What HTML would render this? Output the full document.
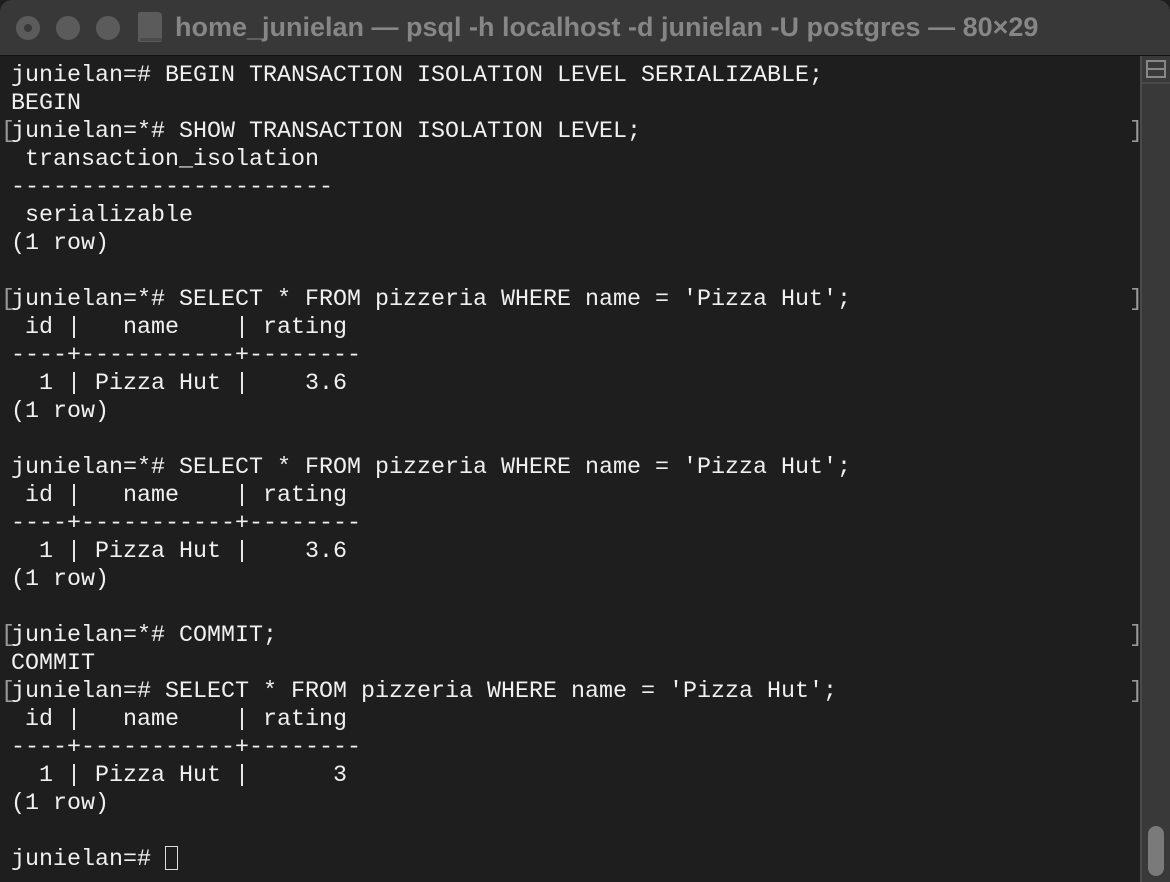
<!DOCTYPE html>
<html><head><meta charset="utf-8"><style>
html,body{margin:0;padding:0;width:1170px;height:882px;overflow:hidden;background:#1e1e1e;}
.tb{position:absolute;left:0;top:0;width:1170px;height:55px;background:#383838;border-bottom:1px solid #111;border-radius:12px 12px 0 0;}
.dot{position:absolute;top:16px;width:24px;height:24px;border-radius:50%;background:#5b5b5b;}
.title{position:absolute;left:175px;top:12px;font:bold 27px "Liberation Sans",sans-serif;color:#868686;white-space:nowrap;}
.term{position:absolute;left:0;top:62px;width:1140px;}
.ln{position:relative;height:28px;font:23.33px/28px "Liberation Mono",monospace;color:#f0f0f0;white-space:pre;padding-left:11px;}
.lb{position:absolute;left:1px;top:0;color:#9a9a9a;}
.rb{position:absolute;left:1129px;top:0;color:#9a9a9a;}
.sb{position:absolute;left:1140px;top:56px;width:30px;height:826px;background:#393939;border-left:2px solid #4a4a4a;box-sizing:border-box;}
.cur{display:inline-block;width:13px;height:24px;border:1.5px solid #ddd;vertical-align:-5px;box-sizing:border-box;}
</style></head><body>
<div class="tb">
<div class="dot" style="left:16px"><div style="position:absolute;left:8px;top:8px;width:8px;height:8px;border-radius:50%;background:#383838"></div></div>
<div class="dot" style="left:56px"></div>
<div class="dot" style="left:96px"></div>
<div style="position:absolute;left:138px;top:12px;width:24px;height:30px;background:#5b5b5b;border-radius:2px 4px 2px 2px"></div>
<div style="position:absolute;left:140px;top:38px;width:22px;height:3px;background:#4a4a4a"></div>
<div class="title">home_junielan — psql -h localhost -d junielan -U postgres — 80×29</div>
</div>
<div class="sb">
<div style="position:absolute;left:4px;top:4px;width:20px;height:18px;border:2px solid #888;box-sizing:border-box"><div style="position:absolute;left:0;right:0;top:6px;height:2px;background:#888"></div></div>
<div style="position:absolute;left:0;right:0;top:26px;height:2px;background:#4a4a4a"></div>
<div style="position:absolute;left:6px;top:770px;width:16px;height:50px;border-radius:8px;background:#7a7a7a"></div>
</div>
<div class="term">
<div class="ln">junielan=# BEGIN TRANSACTION ISOLATION LEVEL SERIALIZABLE;</div>
<div class="ln">BEGIN</div>
<div class="ln"><span class="lb">[</span>junielan=*# SHOW TRANSACTION ISOLATION LEVEL;<span class="rb">]</span></div>
<div class="ln"> transaction_isolation</div>
<div class="ln">-----------------------</div>
<div class="ln"> serializable</div>
<div class="ln">(1 row)</div>
<div class="ln"></div>
<div class="ln"><span class="lb">[</span>junielan=*# SELECT * FROM pizzeria WHERE name = 'Pizza Hut';<span class="rb">]</span></div>
<div class="ln"> id |   name    | rating</div>
<div class="ln">----+-----------+--------</div>
<div class="ln">  1 | Pizza Hut |    3.6</div>
<div class="ln">(1 row)</div>
<div class="ln"></div>
<div class="ln">junielan=*# SELECT * FROM pizzeria WHERE name = 'Pizza Hut';</div>
<div class="ln"> id |   name    | rating</div>
<div class="ln">----+-----------+--------</div>
<div class="ln">  1 | Pizza Hut |    3.6</div>
<div class="ln">(1 row)</div>
<div class="ln"></div>
<div class="ln"><span class="lb">[</span>junielan=*# COMMIT;<span class="rb">]</span></div>
<div class="ln">COMMIT</div>
<div class="ln"><span class="lb">[</span>junielan=# SELECT * FROM pizzeria WHERE name = 'Pizza Hut';<span class="rb">]</span></div>
<div class="ln"> id |   name    | rating</div>
<div class="ln">----+-----------+--------</div>
<div class="ln">  1 | Pizza Hut |      3</div>
<div class="ln">(1 row)</div>
<div class="ln"></div>
<div class="ln">junielan=# <span class="cur"></span></div>
</div>
</body></html>
